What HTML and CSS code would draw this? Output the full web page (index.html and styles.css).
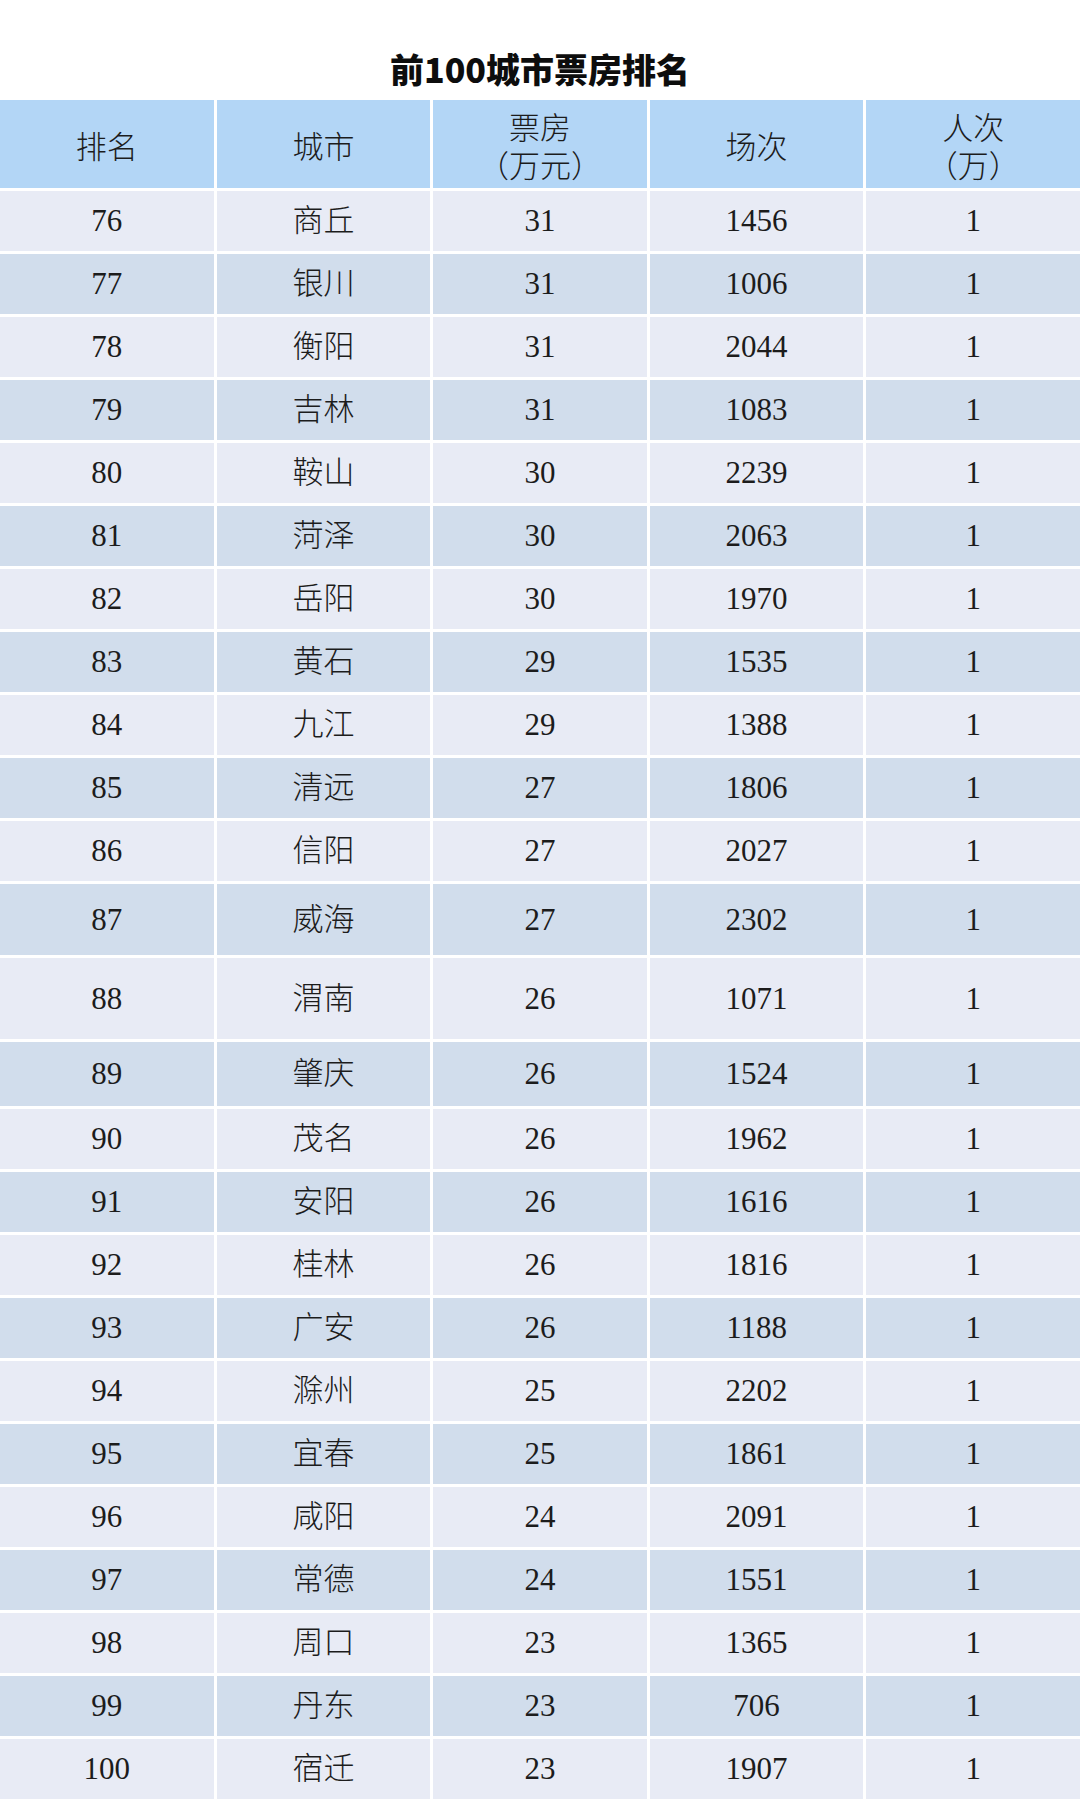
FILE: index.html
```html
<!DOCTYPE html>
<html lang="zh-CN">
<head>
<meta charset="utf-8">
<title>前100城市票房排名</title>
<link rel="stylesheet" href="styles.css">
</head>
<body>
<h1 class="title">前100城市票房排名</h1>
<div class="table">
  <div class="row head">
    <div class="cell">排名</div>
    <div class="cell">城市</div>
    <div class="cell">票房<br>（万元）</div>
    <div class="cell">场次</div>
    <div class="cell">人次<br>（万）</div>
  </div>
  <div class="row light"><div class="cell">76</div><div class="cell">商丘</div><div class="cell">31</div><div class="cell">1456</div><div class="cell">1</div></div>
  <div class="row dark"><div class="cell">77</div><div class="cell">银川</div><div class="cell">31</div><div class="cell">1006</div><div class="cell">1</div></div>
  <div class="row light"><div class="cell">78</div><div class="cell">衡阳</div><div class="cell">31</div><div class="cell">2044</div><div class="cell">1</div></div>
  <div class="row dark"><div class="cell">79</div><div class="cell">吉林</div><div class="cell">31</div><div class="cell">1083</div><div class="cell">1</div></div>
  <div class="row light"><div class="cell">80</div><div class="cell">鞍山</div><div class="cell">30</div><div class="cell">2239</div><div class="cell">1</div></div>
  <div class="row dark"><div class="cell">81</div><div class="cell">菏泽</div><div class="cell">30</div><div class="cell">2063</div><div class="cell">1</div></div>
  <div class="row light"><div class="cell">82</div><div class="cell">岳阳</div><div class="cell">30</div><div class="cell">1970</div><div class="cell">1</div></div>
  <div class="row dark"><div class="cell">83</div><div class="cell">黄石</div><div class="cell">29</div><div class="cell">1535</div><div class="cell">1</div></div>
  <div class="row light"><div class="cell">84</div><div class="cell">九江</div><div class="cell">29</div><div class="cell">1388</div><div class="cell">1</div></div>
  <div class="row dark"><div class="cell">85</div><div class="cell">清远</div><div class="cell">27</div><div class="cell">1806</div><div class="cell">1</div></div>
  <div class="row light"><div class="cell">86</div><div class="cell">信阳</div><div class="cell">27</div><div class="cell">2027</div><div class="cell">1</div></div>
  <div class="row dark h71"><div class="cell">87</div><div class="cell">威海</div><div class="cell">27</div><div class="cell">2302</div><div class="cell">1</div></div>
  <div class="row light h81"><div class="cell">88</div><div class="cell">渭南</div><div class="cell">26</div><div class="cell">1071</div><div class="cell">1</div></div>
  <div class="row dark h64"><div class="cell">89</div><div class="cell">肇庆</div><div class="cell">26</div><div class="cell">1524</div><div class="cell">1</div></div>
  <div class="row light"><div class="cell">90</div><div class="cell">茂名</div><div class="cell">26</div><div class="cell">1962</div><div class="cell">1</div></div>
  <div class="row dark"><div class="cell">91</div><div class="cell">安阳</div><div class="cell">26</div><div class="cell">1616</div><div class="cell">1</div></div>
  <div class="row light"><div class="cell">92</div><div class="cell">桂林</div><div class="cell">26</div><div class="cell">1816</div><div class="cell">1</div></div>
  <div class="row dark"><div class="cell">93</div><div class="cell">广安</div><div class="cell">26</div><div class="cell">1188</div><div class="cell">1</div></div>
  <div class="row light"><div class="cell">94</div><div class="cell">滁州</div><div class="cell">25</div><div class="cell">2202</div><div class="cell">1</div></div>
  <div class="row dark"><div class="cell">95</div><div class="cell">宜春</div><div class="cell">25</div><div class="cell">1861</div><div class="cell">1</div></div>
  <div class="row light"><div class="cell">96</div><div class="cell">咸阳</div><div class="cell">24</div><div class="cell">2091</div><div class="cell">1</div></div>
  <div class="row dark"><div class="cell">97</div><div class="cell">常德</div><div class="cell">24</div><div class="cell">1551</div><div class="cell">1</div></div>
  <div class="row light"><div class="cell">98</div><div class="cell">周口</div><div class="cell">23</div><div class="cell">1365</div><div class="cell">1</div></div>
  <div class="row dark"><div class="cell">99</div><div class="cell">丹东</div><div class="cell">23</div><div class="cell">706</div><div class="cell">1</div></div>
  <div class="row light"><div class="cell">100</div><div class="cell">宿迁</div><div class="cell">23</div><div class="cell">1907</div><div class="cell">1</div></div>
</div>
</body>
</html>
```

FILE: styles.css
```css
html, body {
  margin: 0;
  padding: 0;
  background: #ffffff;
}

body {
  width: 1080px;
  color: #1c1c1c;
  font-family: "Liberation Serif", "Noto Sans CJK SC", serif;
}

.title {
  margin: 0;
  height: 100px;
  box-sizing: border-box;
  padding-top: 50px;
  line-height: 38px;
  font-size: 34px;
  font-weight: 900;
  text-align: center;
  color: #0d0d0d;
  font-family: "Noto Sans CJK SC", "Noto Sans", sans-serif;
}

.table {
  display: flex;
  flex-direction: column;
  row-gap: 3px;
}

.row {
  display: grid;
  grid-template-columns: repeat(5, 1fr);
  column-gap: 3px;
  height: 60px;
}

.row.h71 { height: 71px; }
.row.h81 { height: 81px; }
.row.h64 { height: 64px; }

.cell {
  display: flex;
  align-items: center;
  justify-content: center;
  text-align: center;
  font-size: 31px;
  font-weight: 300;
  line-height: 38px;
}

.head {
  height: 88px;
}

.head .cell {
  background: #b3d6f6;
  padding-top: 8px;
  box-sizing: border-box;
}

.light .cell {
  background: #e8ebf5;
}

.dark .cell {
  background: #d1ddec;
}
```
